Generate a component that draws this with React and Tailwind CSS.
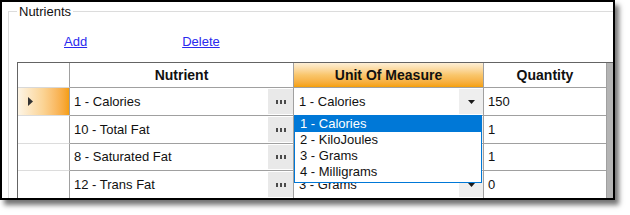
import React from 'react';

// rows 2 and 3 have their unit cell hidden under the open list
const rows = [
  { id: 1, nutrient: "1 - Calories", unit: "1 - Calories", qty: "150", current: true, h: "h-[28px]" },
  { id: 2, nutrient: "10 - Total Fat", unit: "", qty: "1", h: "h-[28px]" },
  { id: 3, nutrient: "8 - Saturated Fat", unit: "", qty: "1", h: "h-[27px]" },
  { id: 4, nutrient: "12 - Trans Fat", unit: "3 - Grams", qty: "0", h: "h-[28px]" },
];

const units = ["1 - Calories", "2 - KiloJoules", "3 - Grams", "4 - Milligrams"];

const Ellipsis = () => (
  <div className="w-[25px] self-stretch my-[1px] bg-[#e9e9e9] flex items-center justify-center gap-[2px]">
    <span className="w-[2px] h-[4px] bg-[#4a4a4a]"></span>
    <span className="w-[2px] h-[4px] bg-[#4a4a4a]"></span>
    <span className="w-[2px] h-[4px] bg-[#4a4a4a]"></span>
  </div>
);

const DropArrow = () => (
  <div className="w-[24px] self-stretch my-[1px] bg-[#eeeeee] flex items-center justify-center">
    <svg width="7" height="4" viewBox="0 0 7 4"><path d="M0 0h7L3.5 4z" fill="#1a1a1a" /></svg>
  </div>
);

const App = () => {
  return (
    <div className="w-[630px] h-[215px] bg-white font-['Liberation_Sans',Arial,sans-serif] text-[13px] text-[#111]">
      <div className="w-[615px] h-[200px] border-2 border-black overflow-hidden bg-white shadow-[4px_5px_5px_rgba(0,0,0,0.55)]">
        <fieldset className="ml-[6px] mt-[2px] w-[640px] h-[260px] border border-[#dcdcdc]">
          <legend className="ml-[8px] px-[2px] leading-[15px]">Nutrients</legend>

          {/* links */}
          <div className="flex pl-[55px] mt-[15px] h-[16px] leading-[16px] gap-[95px]">
            <span className="text-[#2a2aee] underline">Add</span>
            <span className="text-[#2a2aee] underline">Delete</span>
          </div>

          {/* grid */}
          <div className="relative ml-[8px] mt-[12px] border-l border-t border-[#646464] bg-[#b4b4b4] flex flex-col">
            <div className="flex h-[25px]">
              <div className="w-[52px] bg-white border-r border-r-[#a0a0a0] border-b border-b-[#d8d8d8]"></div>
              <div className="w-[224px] bg-white border-r border-b border-[#a0a0a0] flex items-center justify-center font-bold text-[14px]">Nutrient</div>
              <div className="w-[190px] bg-gradient-to-b from-[#fdefd6] via-[#f9c66b] to-[#f5a000] border-r border-b border-[#a0a0a0] flex items-center justify-center font-bold text-[14px]">Unit Of Measure</div>
              <div className="w-[123px] bg-white border-r border-b border-[#a0a0a0] flex items-center justify-center font-bold text-[14px]">Quantity</div>
            </div>

            {rows.map((r) => (
              <div key={r.id} className={`flex ${r.h}`}>
                <div className={`w-[52px] border-r border-r-[#a0a0a0] border-b border-b-[#dcdcdc] flex items-center pl-[10px] ${r.current ? 'bg-gradient-to-r from-[#fdf5e6] via-[#fbd393] to-[#f69e08]' : 'bg-white'}`}>
                  {r.current && (
                    <svg width="5" height="9" viewBox="0 0 5 9"><path d="M0 0l5 4.5L0 9z" fill="#333" /></svg>
                  )}
                </div>
                <div className="w-[224px] bg-white border-r border-b border-[#a0a0a0] flex items-center">
                  <span className="flex-1 pl-[4px]">{r.nutrient}</span>
                  <Ellipsis />
                </div>
                <div className="w-[190px] bg-white border-r border-b border-[#a0a0a0] flex items-center">
                  <span className="flex-1 pl-[5px]">{r.unit}</span>
                  <DropArrow />
                </div>
                <div className="w-[123px] bg-white border-r border-b border-[#a0a0a0] flex items-center pl-[4px]">
                  {r.qty}
                </div>
              </div>
            ))}

            {/* open combo list */}
            <ul className="absolute left-[276px] top-[52px] w-[188px] h-[68px] border border-[#0078d7] bg-white">
              {units.map((u, i) => (
                <li key={u} className={`h-[16px] leading-[16px] pl-[5px] ${i === 0 ? 'bg-[#0078d7] text-white' : ''}`}>{u}</li>
              ))}
            </ul>
          </div>
        </fieldset>
      </div>
    </div>
  );
};

export default App;
